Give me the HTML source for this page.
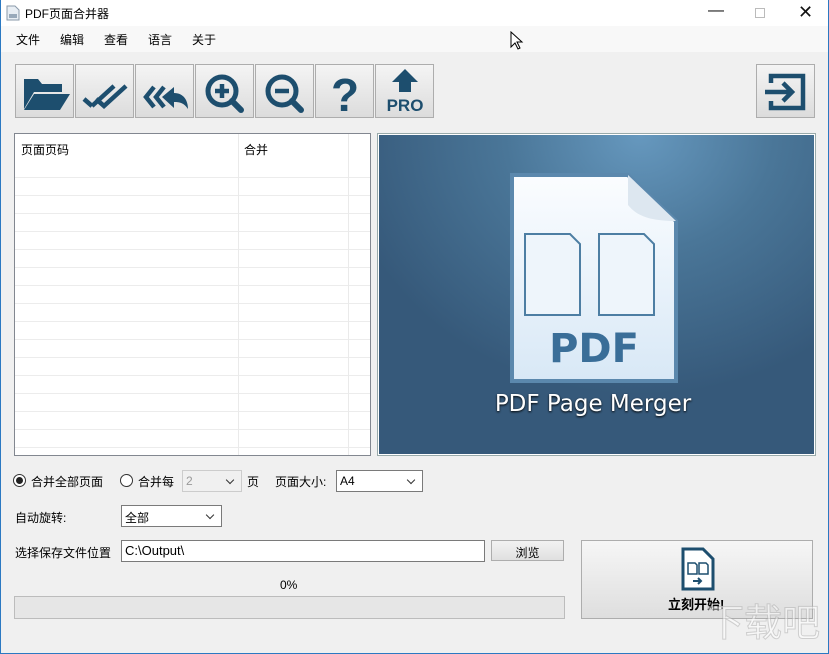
<!DOCTYPE html>
<html style="width:829px;height:654px;overflow:hidden"><head><meta charset="utf-8"><style>
*{box-sizing:border-box;margin:0;padding:0}
body{width:829px;height:654px;overflow:hidden;background:#f0f0f0;font-family:"Liberation Sans","Noto Sans CJK SC",sans-serif;font-size:12px;color:#000;position:relative}
.abs{position:absolute}
.frame{position:absolute;left:0;top:0;width:829px;height:654px;border:1px solid #2b79c2;border-top:none;pointer-events:none}
.tb{position:absolute;top:64px;width:59px;height:54px;border:1px solid #adadad;background:linear-gradient(#f4f4f4,#dcdcdc)}
.tb svg{position:absolute;left:0;top:0}
.combo{position:absolute;background:#fff;border:1px solid #7a7a7a;height:22px;font-size:12px;padding:3px 0 0 3px}
.combo:after{content:"";position:absolute;right:8px;top:6px;width:5px;height:5px;border-right:1px solid #333;border-bottom:1px solid #333;transform:rotate(45deg)}
.lbl{position:absolute;font-size:12px;white-space:nowrap}
</style></head><body>
<div class="abs" style="left:0;top:0;width:829px;height:26px;background:#fff"></div>
<svg class="abs" style="left:6px;top:5px" width="14" height="16"><path d="M1 1h8l4 4v10H1z" fill="#e8eef4" stroke="#8a9aaa"/><rect x="3" y="9" width="8" height="4" fill="#9ab"/></svg>
<div class="lbl" style="left:25px;top:5px;font-size:12px">PDF页面合并器</div>
<div class="lbl" style="left:708px;top:2px;font-size:16px;color:#111">—</div>
<div class="abs" style="left:755px;top:8px;width:10px;height:10px;border:1px solid #bbb"></div>
<div class="lbl" style="left:798px;top:2px;font-size:18px;color:#111">✕</div>
<div class="abs" style="left:0;top:26px;width:829px;height:26px;background:#f8f8f8"></div>
<div class="lbl" style="left:16px;top:31px">文件</div>
<div class="lbl" style="left:60px;top:31px">编辑</div>
<div class="lbl" style="left:104px;top:31px">查看</div>
<div class="lbl" style="left:148px;top:31px">语言</div>
<div class="lbl" style="left:192px;top:31px">关于</div>
<svg class="abs" style="left:510px;top:31px" width="14" height="20"><path d="M1 1v15l4-4 3 6 2-1-3-6h5z" fill="#fff" stroke="#000"/></svg>

<div class="tb" style="left:15px"><svg width="58" height="52"><path d="M8 14h14l4 5h20v8H18L8 44z" fill="#1d4e6e"/><path d="M18 29h36l-10 16H8z" fill="#1d4e6e"/></svg></div>
<div class="tb" style="left:75px"><svg width="58" height="52"><path d="M8 34l8 7M20 34l8 7 22-20M16 41l22-20" stroke="#1d4e6e" stroke-width="4.5" fill="none"/></svg></div>
<div class="tb" style="left:135px"><svg width="58" height="52"><path d="M18 22l-8 10 8 10M28 22l-8 10 8 10" stroke="#1d4e6e" stroke-width="4.5" fill="none"/><path d="M26 32l12-10v6c10 0 14 8 14 16-4-6-8-7-14-7v6z" fill="#1d4e6e"/></svg></div>
<div class="tb" style="left:195px"><svg width="58" height="52"><circle cx="26" cy="26" r="14" fill="none" stroke="#1d4e6e" stroke-width="5"/><path d="M26 19v14M19 26h14" stroke="#1d4e6e" stroke-width="4.5"/><path d="M36 36l9 9" stroke="#1d4e6e" stroke-width="6" stroke-linecap="round"/></svg></div>
<div class="tb" style="left:255px"><svg width="58" height="52"><circle cx="26" cy="26" r="14" fill="none" stroke="#1d4e6e" stroke-width="5"/><path d="M19 26h14" stroke="#1d4e6e" stroke-width="4.5"/><path d="M36 36l9 9" stroke="#1d4e6e" stroke-width="6" stroke-linecap="round"/></svg></div>
<div class="tb" style="left:315px"><svg width="58" height="52"><text x="29" y="46" text-anchor="middle" font-family="Liberation Sans" font-weight="bold" font-size="46" fill="#1d4e6e">?</text></svg></div>
<div class="tb" style="left:375px"><svg width="58" height="52"><path d="M29 4l13 13h-7v10H23V17h-7z" fill="#1d4e6e"/><text x="29" y="46" text-anchor="middle" font-family="Liberation Sans" font-weight="bold" font-size="17" fill="#1d4e6e">PRO</text></svg></div>
<div class="tb" style="left:756px"><svg width="58" height="52"><path d="M14 18v-7h32v32H14v-7" stroke="#1d4e6e" stroke-width="4.5" fill="none"/><path d="M8 27h26M26 18l9 9-9 9" stroke="#1d4e6e" stroke-width="4.5" fill="none"/></svg></div>

<div class="abs" style="left:14px;top:133px;width:357px;height:323px;border:1px solid #828790;background:#fff;background-image:repeating-linear-gradient(#fff 0 17px,#ececec 17px 18px);background-position:0 26px;background-size:100% 18px;"></div>
<div class="abs" style="left:15px;top:134px;width:355px;height:26px;background:#fff"></div>
<div class="abs" style="left:238px;top:134px;width:1px;height:321px;background:#eaeaea"></div>
<div class="abs" style="left:348px;top:134px;width:1px;height:321px;background:#eaeaea"></div>
<div class="lbl" style="left:21px;top:141px">页面页码</div>
<div class="lbl" style="left:244px;top:141px">合并</div>

<div class="abs" style="left:377px;top:133px;width:439px;height:323px;border:1px solid #9aa;background:#fff;padding:1px">
<div style="width:100%;height:100%;background:radial-gradient(ellipse 300px 260px at 60% 0%,#6698be 0%,#4a7698 45%,#36597a 100%)"></div></div>
<svg class="abs" style="left:377px;top:133px" width="439" height="323">
<defs><linearGradient id="pg" x1="0" y1="0" x2="0" y2="1"><stop offset="0" stop-color="#fbfdff"/><stop offset="1" stop-color="#d8e8f6"/></linearGradient></defs>
<path d="M135 42h116l48 46v160H135z" fill="url(#pg)" stroke="#5b88ad" stroke-width="4"/>
<path d="M251 42v30c8 10 20 16 48 16z" fill="#dde7f0"/>
<path d="M148 101h45l10 10v71h-55z" fill="#eef5fb" stroke="#4d7ea3" stroke-width="2"/>
<path d="M222 101h45l10 10v71h-55z" fill="#eef5fb" stroke="#4d7ea3" stroke-width="2"/>
<text x="217" y="229" text-anchor="middle" font-family="DejaVu Sans" font-weight="bold" font-size="40" fill="#3a6e98">PDF</text>
<text x="216" y="278" text-anchor="middle" font-family="DejaVu Sans" font-size="23" fill="#fff" style="text-shadow:0 1px 2px #000">PDF Page Merger</text>
</svg>

<div class="abs" style="left:13px;top:474px;width:13px;height:13px;border:1px solid #333;border-radius:50%;background:#fff"><div style="margin:2px;width:7px;height:7px;border-radius:50%;background:#222"></div></div>
<div class="lbl" style="left:31px;top:473px">合并全部页面</div>
<div class="abs" style="left:120px;top:474px;width:13px;height:13px;border:1px solid #333;border-radius:50%;background:#fff"></div>
<div class="lbl" style="left:138px;top:473px">合并每</div>
<div class="combo" style="left:182px;top:470px;width:60px;background:#f0f0f0;border-color:#ccc;color:#999">2</div>
<div class="lbl" style="left:247px;top:473px">页</div>
<div class="lbl" style="left:275px;top:473px">页面大小:</div>
<div class="combo" style="left:336px;top:470px;width:87px">A4</div>
<div class="lbl" style="left:15px;top:509px">自动旋转:</div>
<div class="combo" style="left:121px;top:505px;width:101px">全部</div>
<div class="lbl" style="left:15px;top:544px">选择保存文件位置</div>
<div class="abs" style="left:121px;top:540px;width:364px;height:22px;background:#fff;border:1px solid #7a7a7a;font-size:13px;padding:2px 0 0 3px">C:\Output\</div>
<div class="abs" style="left:491px;top:540px;width:73px;height:21px;border:1px solid #adadad;background:linear-gradient(#f2f2f2,#e0e0e0);text-align:center;padding-top:3px">浏览</div>
<div class="lbl" style="left:280px;top:578px">0%</div>
<div class="abs" style="left:14px;top:596px;width:551px;height:23px;border:1px solid #bcbcbc;background:#e6e6e6"></div>
<div class="abs" style="left:581px;top:540px;width:232px;height:79px;border:1px solid #adadad;background:linear-gradient(#f6f6f6,#dedede)"></div>
<svg class="abs" style="left:680px;top:546px" width="36" height="46"><path d="M3 3h20l10 10v30H3z" fill="#fff" stroke="#1d4e6e" stroke-width="3"/><path d="M8 17h7l2 2v9H8zM19 17h7l2 2v9h-9z" fill="#fff" stroke="#1d4e6e" stroke-width="1.5"/><path d="M13 35h8M18 32l3 3-3 3" stroke="#1d4e6e" stroke-width="2" fill="none"/></svg>
<div class="lbl" style="left:668px;top:594px;font-weight:bold;font-size:13px">立刻开始!</div>
<div class="lbl" style="left:706px;top:604px;font-size:38px;line-height:40px;color:rgba(255,255,255,0.5);-webkit-text-stroke:1px rgba(150,150,150,0.4)">下载吧</div>
<div class="frame"></div>
</body></html>
